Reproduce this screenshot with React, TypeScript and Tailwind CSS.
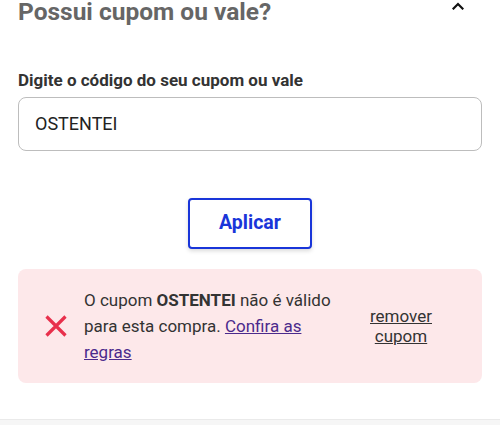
import React, { useState } from 'react';

const ChevronUp: React.FC = () => (
    <svg width="12" height="8" viewBox="0 0 12 8" fill="none">
        <path d="M1.5 6.5 L6 2 L10.5 6.5" stroke="#111" strokeWidth="2.2" strokeLinecap="square" />
    </svg>
);

const CrossIcon: React.FC = () => (
    <svg width="24" height="24" viewBox="0 0 24 24" fill="none">
        <path d="M2.5 2.5 L21.5 21.5 M21.5 2.5 L2.5 21.5" stroke="#e8304c" strokeWidth="3.2" strokeLinecap="butt" />
    </svg>
);

export default function App() {
    const [code, setCode] = useState('OSTENTEI');

    return (
        <div className="w-[500px] h-[425px] overflow-hidden bg-white" style={{ fontFamily: 'Roboto, "Liberation Sans", sans-serif' }}>
            <div className="px-[18px]">
                <div className="flex justify-between items-start">
                    <h2 className="text-[24.5px] leading-none font-bold text-[#666]">Possui cupom ou vale?</h2>
                    <div className="mr-[18px] mt-[2px]"><ChevronUp /></div>
                </div>

                <label className="block mt-[45px] text-[17px] leading-[20px] font-bold text-[#333]">
                    Digite o código do seu cupom ou vale
                </label>
                <input
                    value={code}
                    onChange={e => setCode(e.target.value)}
                    className="mt-[7px] block w-full h-[54px] px-4 border border-[#bdbdbd] rounded-lg text-[18px] text-[#222] outline-none"
                />

                <div className="flex justify-center mt-[47px]">
                    <button className="w-[124px] h-[51px] border-2 border-[#1935d9] rounded-[4px] text-[19.5px] font-bold text-[#1935d9] bg-white shadow-[0_2px_4px_rgba(0,0,0,0.15)]">
                        Aplicar
                    </button>
                </div>

                <div className="mt-[20px] h-[114px] rounded-lg bg-[#fde8ea] flex items-center pl-[26px]">
                    <CrossIcon />
                    <p className="ml-4 w-[250px] text-[17px] leading-[26px] text-[#333]">
                        O cupom <b className="font-bold">OSTENTEI</b> não é válido para esta compra.{' '}
                        <a href="#" className="underline text-[#4b2a8c]">Confira as regras</a>
                    </p>
                    <a href="#" className="ml-auto mr-[31px] w-[100px] text-center text-[17px] leading-[20px] underline text-[#333]">
                        remover cupom
                    </a>
                </div>
            </div>

            <div className="mt-[36px] border-t border-[#eaeaea] bg-[#f6f6f6] h-[10px]" />
        </div>
    );
}
